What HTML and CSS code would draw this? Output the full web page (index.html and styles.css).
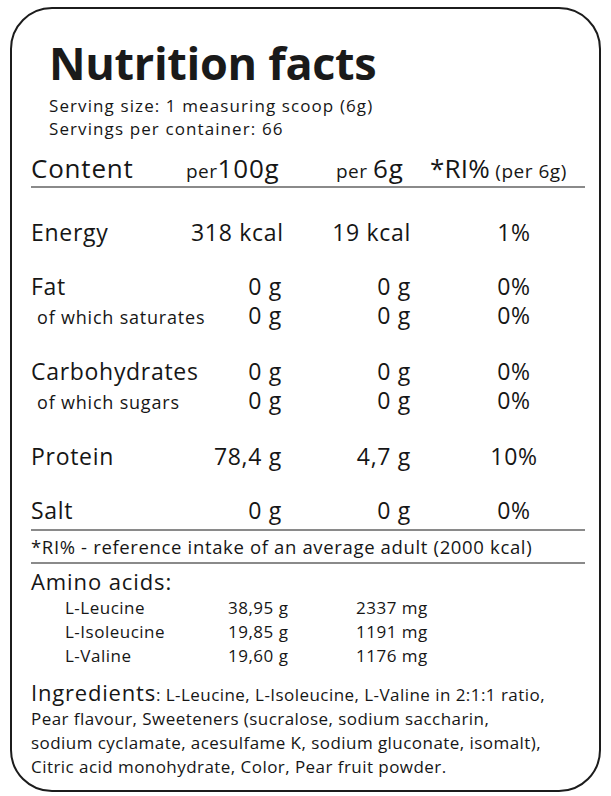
FILE: index.html
```html
<!DOCTYPE html>
<html lang="en">
<head>
<meta charset="utf-8">
<title>Nutrition facts</title>
<link rel="stylesheet" href="styles.css">
</head>
<body>
<div class="card">
  <header class="head">
    <h1 class="title">Nutrition facts</h1>
    <p class="serving">Serving size: 1 measuring scoop (6g)</p>
    <p class="serving">Servings per container: 66</p>
  </header>

  <div class="thead">
    <span class="h-label">Content</span>
    <span class="h-100"><small>per</small>100g</span>
    <span class="h-6"><small>per </small>6g</span>
    <span class="h-ri">*RI%<small> (per 6g)</small></span>
  </div>

  <div class="tbody">
    <div class="row main"><span class="lbl">Energy</span><span class="v1">318 kcal</span><span class="v2">19 kcal</span><span class="v3">1%</span></div>

    <div class="row main gap"><span class="lbl">Fat</span><span class="v1">0 g</span><span class="v2">0 g</span><span class="v3">0%</span></div>
    <div class="row sub"><span class="lbl">of which saturates</span><span class="v1">0 g</span><span class="v2">0 g</span><span class="v3">0%</span></div>

    <div class="row main gap"><span class="lbl">Carbohydrates</span><span class="v1">0 g</span><span class="v2">0 g</span><span class="v3">0%</span></div>
    <div class="row sub"><span class="lbl">of which sugars</span><span class="v1">0 g</span><span class="v2">0 g</span><span class="v3">0%</span></div>

    <div class="row main gap"><span class="lbl">Protein</span><span class="v1">78,4 g</span><span class="v2">4,7 g</span><span class="v3">10%</span></div>

    <div class="row main gap"><span class="lbl">Salt</span><span class="v1">0 g</span><span class="v2">0 g</span><span class="v3">0%</span></div>
  </div>

  <p class="note">*RI% - reference intake of an average adult (2000 kcal)</p>

  <section class="amino">
    <h2 class="amino-title">Amino acids:</h2>
    <div class="arow"><span>L-Leucine</span><span>38,95 g</span><span>2337 mg</span></div>
    <div class="arow"><span>L-Isoleucine</span><span>19,85 g</span><span>1191 mg</span></div>
    <div class="arow"><span>L-Valine</span><span>19,60 g</span><span>1176 mg</span></div>
  </section>

  <p class="ingredients"><span class="ing-title">Ingredients</span>: L-Leucine, L-Isoleucine, L-Valine in 2:1:1 ratio,<br>Pear flavour, Sweeteners (sucralose, sodium saccharin,<br>sodium cyclamate, acesulfame K, sodium gluconate, isomalt),<br>Citric acid monohydrate, Color, Pear fruit powder.</p>
</div>
</body>
</html>
```

FILE: styles.css
```css
html, body {
  margin: 0;
  padding: 0;
  background: #ffffff;
}

body {
  font-family: "Open Sans", "Noto Sans", sans-serif;
  color: #161616;
}

.card {
  margin: 7px 0 0 10px;
  width: 591px;
  height: 785px;
  box-sizing: border-box;
  border: 2px solid #1c1c1c;
  border-radius: 42px;
  padding: 0 14px 0 19px;
  overflow: hidden;
}

.head {
  padding: 23px 0 0 18px;
}

.title {
  margin: 0;
  font-size: 45px;
  line-height: 62px;
  font-weight: 700;
  letter-spacing: -0.3px;
  color: #1a1a1a;
}

.serving {
  margin: 0;
  font-size: 17px;
  line-height: 23.2px;
  letter-spacing: 1.1px;
}

.thead {
  display: flex;
  align-items: baseline;
  margin-top: 13px;
  font-size: 26px;
  line-height: 30px;
  letter-spacing: 0.8px;
  border-bottom: 2px solid #8a8a8a;
}

.thead small {
  font-size: 19px;
  letter-spacing: 0.5px;
}

.h-label { width: 155px; flex: none; }
.h-100 { width: 150px; flex: none; }
.h-6 { width: 94px; flex: none; }
.h-ri { white-space: nowrap; letter-spacing: 0.2px; }

.tbody {
  padding-top: 30px;
  padding-bottom: 4px;
  border-bottom: 2px solid #8a8a8a;
}

.row {
  display: grid;
  grid-template-columns: 160px 91px 129px 43px 120px;
  align-items: baseline;
  line-height: 29px;
  font-size: 23px;
  letter-spacing: 0.7px;
}

.row.gap { margin-top: 25px; }

.row .lbl { grid-column: 1; white-space: nowrap; }
.row .v1 { grid-column: 2; text-align: right; white-space: nowrap; }
.row .v2 { grid-column: 3; text-align: right; white-space: nowrap; }
.row .v3 { grid-column: 5; text-align: center; }

.row.sub .lbl {
  font-size: 18px;
  letter-spacing: 0.8px;
  padding-left: 6px;
}

.note {
  margin: 0;
  font-size: 18.5px;
  letter-spacing: 0.65px;
  line-height: 31px;
  border-bottom: 2px solid #8a8a8a;
}

.amino {
  padding-top: 2px;
}

.amino-title {
  margin: 0;
  font-size: 22px;
  letter-spacing: 0.9px;
  font-weight: 400;
  line-height: 30px;
}

.arow {
  display: grid;
  grid-template-columns: 163px 128px auto;
  padding-left: 34px;
  font-size: 17px;
  letter-spacing: 0.5px;
  line-height: 24px;
}

.ingredients {
  margin: 12px 0 0;
  font-size: 17px;
  letter-spacing: 0.45px;
  line-height: 24px;
}

.ing-title {
  font-size: 22px;
  letter-spacing: 0.8px;
}
```
